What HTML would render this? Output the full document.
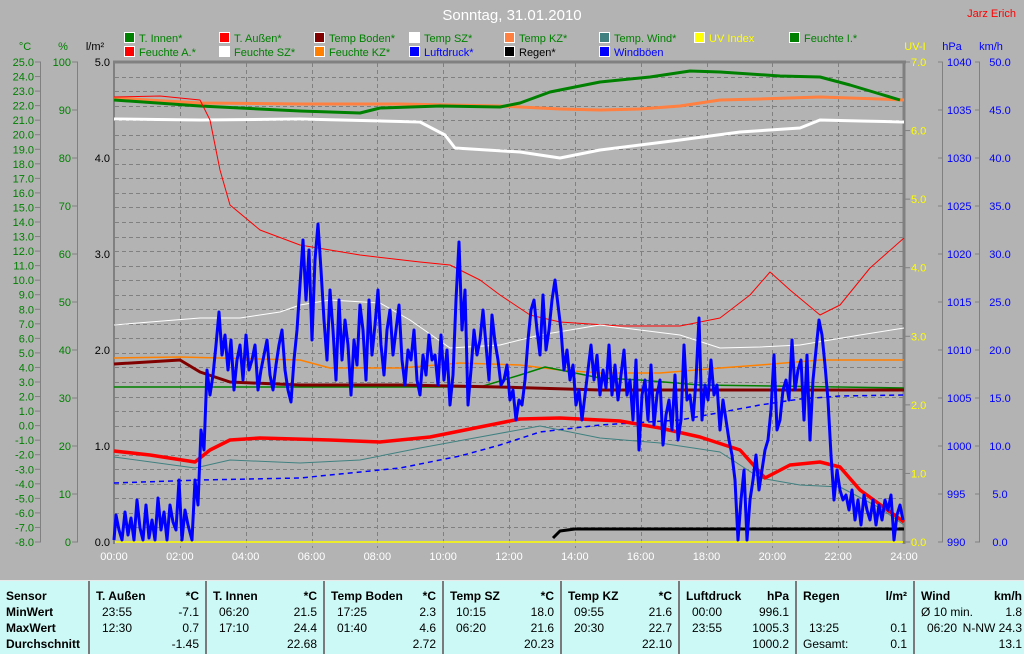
<!DOCTYPE html>
<html><head><meta charset="utf-8"><style>
html,body{margin:0;padding:0;background:#b3b3b3;}
body{width:1024px;height:653px;overflow:hidden;position:relative;font-family:"Liberation Sans",sans-serif;}
svg{position:absolute;left:0;top:0}
text{font-family:"Liberation Sans",sans-serif;font-size:11px}
.t{position:absolute;left:0;top:580px;width:1024px;height:73px;background:#ccf9f5;border-top:1px solid #e8e8e8}
.c{position:absolute;top:0;height:73px;border-left:2px solid #7a7a7a;box-sizing:border-box;font-size:12px;color:#000}
.r{position:absolute;left:0;right:0;height:16px;line-height:16px}
.r b{font-weight:bold}
.l{position:absolute;left:6px}
.tm{position:absolute;left:12px}
.v{position:absolute;right:6px}
</style></head><body>
<svg width="1024" height="653" viewBox="0 0 1024 653">
<text x="512" y="20" fill="#fff" text-anchor="middle" style="font-size:15px">Sonntag, 31.01.2010</text>
<text x="1016" y="17" fill="#f00" text-anchor="end" style="font-size:11px">Jarz Erich</text>
<g stroke="#fff" stroke-width="1">
<rect x="124.5" y="32.5" width="10" height="10" fill="#008000"/><rect x="124.5" y="46.5" width="10" height="10" fill="#f00"/>
<rect x="219.5" y="32.5" width="10" height="10" fill="#f00"/><rect x="219.5" y="46.5" width="10" height="10" fill="#fff"/>
<rect x="314.5" y="32.5" width="10" height="10" fill="#800000"/><rect x="314.5" y="46.5" width="10" height="10" fill="#ff8000"/>
<rect x="409.5" y="32.5" width="10" height="10" fill="#fff"/><rect x="409.5" y="46.5" width="10" height="10" fill="#0000ff"/>
<rect x="504.5" y="32.5" width="10" height="10" fill="#ff8040"/><rect x="504.5" y="46.5" width="10" height="10" fill="#000"/>
<rect x="599.5" y="32.5" width="10" height="10" fill="#408080"/><rect x="599.5" y="46.5" width="10" height="10" fill="#0000ff"/>
<rect x="694.5" y="32.5" width="10" height="10" fill="#ffff00"/>
<rect x="789.5" y="32.5" width="10" height="10" fill="#008000"/>
</g>
<g fill="#008000">
<text x="139" y="42">T. Innen*</text><text x="139" y="56">Feuchte A.*</text>
<text x="234" y="42">T. Außen*</text><text x="234" y="56">Feuchte SZ*</text>
<text x="329" y="42">Temp Boden*</text><text x="329" y="56">Feuchte KZ*</text>
<text x="424" y="42">Temp SZ*</text><text x="424" y="56" fill="#0000ff">Luftdruck*</text>
<text x="519" y="42">Temp KZ*</text><text x="519" y="56" fill="#000">Regen*</text>
<text x="614" y="42">Temp. Wind*</text><text x="614" y="56" fill="#0000ff">Windböen</text>
<text x="709" y="42" fill="#ffff00">UV Index</text>
<text x="804" y="42">Feuchte I.*</text>
</g>
<text x="25" y="50" fill="#008000" text-anchor="middle">°C</text>
<text x="63" y="50" fill="#008000" text-anchor="middle">%</text>
<text x="95" y="50" fill="#000" text-anchor="middle">l/m²</text>
<text x="915" y="50" fill="#ffff00" text-anchor="middle">UV-I</text>
<text x="952" y="50" fill="#0000ff" text-anchor="middle">hPa</text>
<text x="991" y="50" fill="#0000ff" text-anchor="middle">km/h</text>
<g stroke="#808080" stroke-width="1">
<line x1="40.5" y1="62" x2="40.5" y2="542"/><line x1="77.5" y1="62" x2="77.5" y2="542"/>
<line x1="942.5" y1="62" x2="942.5" y2="542"/><line x1="979.5" y1="62" x2="979.5" y2="542"/>
</g>
<g id="ct" stroke="#808080"></g>
<g id="labels"></g>
<g id="grid" stroke="#808080" stroke-dasharray="4,3" stroke-width="1"></g>
<line x1="113" y1="62" x2="906" y2="62" stroke="#808080" stroke-width="3"/>
<line x1="114" y1="61" x2="114" y2="544" stroke="#808080" stroke-width="2"/>
<line x1="904" y1="61" x2="904" y2="544" stroke="#808080" stroke-width="3"/>
<line x1="115" y1="542" x2="903" y2="542" stroke="#ffff00" stroke-width="1.5"/>
<g fill="none" stroke-linejoin="round">
<polyline stroke="#ff8040" stroke-width="3" points="114,98 200,103 300,104 400,104 500,106 560,109 600,110 640,109 680,106 720,100 760,99 820,97 880,99 904,100"/>
<polyline stroke="#008000" stroke-width="3" points="114,100 200,106 300,111 360,113 380,108 440,106 500,107 520,103 550,92 600,82 650,77 690,71 720,72 780,76 820,77 850,85 880,94 900,100"/>
<polyline stroke="#fff" stroke-width="3" points="114,119 200,120 300,119 420,122 445,135 455,148 520,152 560,158 600,150 680,140 740,132 800,128 820,120 860,121 904,122"/>
<polyline stroke="#f00" stroke-width="1" points="114,97 160,96 200,100 210,120 220,170 230,205 260,230 300,245 360,255 420,262 450,265 480,280 500,295 530,315 560,322 620,326 680,326 720,318 750,295 770,272 790,290 820,315 840,305 870,268 904,238"/>
<polyline stroke="#fff" stroke-width="1" points="114,325 150,322 200,318 240,318 280,312 300,305 330,300 380,303 410,320 450,348 500,345 540,335 600,325 640,330 680,335 720,348 760,347 800,345 860,335 904,328"/>
<polyline stroke="#ff8000" stroke-width="1.5" points="114,358 180,357 300,360 330,368 400,368 460,363 520,365 560,370 600,373 660,373 720,368 760,365 820,360 904,360"/>
<polyline stroke="#008000" stroke-width="1.5" points="114,387 480,387 520,375 545,367 570,372 600,378 640,380 700,385 904,388"/>
<polyline stroke="#800000" stroke-width="3" points="114,364 180,360 200,372 230,382 300,385 400,385 500,387 600,390 700,390 800,390 904,390"/>
<polyline stroke="#0000ff" stroke-width="1.5" stroke-dasharray="5,4" points="114,483 200,480 300,478 400,468 460,456 500,445 540,432 600,425 680,420 760,405 800,399 840,396 904,395"/>
<polyline stroke="#408080" stroke-width="1" points="114,457 195,468 230,460 300,463 360,460 420,448 480,437 540,426 600,438 660,443 720,452 760,478 800,485 840,487 880,508 904,525"/>
<polyline stroke="#f00" stroke-width="3.5" points="114,451 150,455 195,462 210,450 230,440 260,438 330,440 380,442 430,437 480,427 520,419 560,418 620,421 660,428 700,437 740,450 765,478 790,465 820,462 840,467 860,490 904,522"/>
<polyline stroke="#000" stroke-width="3" points="553,538 560,531 575,529 904,529"/>
<polyline stroke="#0000ff" stroke-width="3" points="114,540 116,515 119,530 122,540 125,512 128,535 131,518 134,540 137,500 140,528 143,540 146,505 149,538 152,520 155,540 158,498 161,530 164,512 167,540 170,505 173,522 176,530 179,480 182,540 185,510 188,525 192,540 195,480 198,505 201,430 204,450 207,370 210,395 213,375 216,345 219,312 222,355 225,335 228,370 231,340 234,390 237,360 240,345 243,380 246,335 249,370 252,360 255,345 258,390 261,370 264,355 267,340 270,375 273,390 276,365 279,345 282,330 285,370 288,390 291,402 294,360 297,330 300,285 303,240 306,300 309,250 312,340 315,260 318,224 321,270 324,320 327,360 330,290 333,330 336,380 339,300 342,360 345,320 348,345 351,395 354,340 357,365 360,305 363,330 366,380 369,300 372,355 375,325 378,290 381,345 384,375 387,330 390,310 393,355 396,330 399,305 402,360 405,385 408,350 411,360 414,330 417,380 420,395 423,355 426,375 429,335 432,360 435,355 438,385 441,335 444,380 447,350 450,405 453,375 456,300 459,242 462,330 465,290 468,405 471,370 474,330 477,355 480,340 483,310 486,345 489,380 492,315 495,342 498,360 501,385 504,380 507,365 510,400 513,390 516,420 519,400 522,405 525,380 528,340 531,310 534,300 537,330 540,355 543,295 546,350 549,330 552,300 555,280 558,305 561,330 564,370 567,350 570,380 573,365 576,405 579,390 582,420 585,395 588,370 591,345 594,380 597,355 600,395 603,370 606,388 609,345 612,395 615,365 618,400 621,375 624,350 627,395 630,380 633,420 636,360 639,450 642,395 645,380 648,420 651,365 654,425 657,395 660,380 663,445 666,415 669,400 672,430 675,375 678,440 681,420 684,345 687,400 690,395 693,420 696,380 699,318 702,420 705,385 708,400 711,360 714,395 717,385 720,430 723,400 726,420 729,440 732,455 735,480 738,540 741,500 744,470 747,540 750,500 753,480 756,455 759,490 762,470 765,450 768,440 771,410 774,355 777,430 780,420 783,390 786,380 789,400 792,340 795,390 798,370 801,360 804,420 807,355 810,440 813,380 816,350 819,320 822,335 825,365 828,400 831,455 834,500 837,470 840,490 843,500 846,495 849,510 852,490 855,520 858,500 861,525 864,495 867,510 870,520 873,500 876,525 879,505 882,520 885,500 888,510 891,495 894,540 897,515 900,505 903,520"/>
</g>
<g id="xl" fill="#fff"></g>
</svg>
<div class="t">
 <div class="c" style="left:0;width:88px;border-left:none"><div class="r" style="top:7px"><b class="l">Sensor</b></div><div class="r" style="top:23px"><b class="l">MinWert</b></div><div class="r" style="top:39px"><b class="l">MaxWert</b></div><div class="r" style="top:55px"><b class="l">Durchschnitt</b></div></div>
 <div class="c" style="left:88px;width:117px"><div class="r" style="top:7px"><b class="l">T. Außen</b><b class="v">*C</b></div><div class="r" style="top:23px"><span class="tm">23:55</span><span class="v">-7.1</span></div><div class="r" style="top:39px"><span class="tm">12:30</span><span class="v">0.7</span></div><div class="r" style="top:55px"><span class="v">-1.45</span></div></div>
 <div class="c" style="left:205px;width:118px"><div class="r" style="top:7px"><b class="l">T. Innen</b><b class="v">*C</b></div><div class="r" style="top:23px"><span class="tm">06:20</span><span class="v">21.5</span></div><div class="r" style="top:39px"><span class="tm">17:10</span><span class="v">24.4</span></div><div class="r" style="top:55px"><span class="v">22.68</span></div></div>
 <div class="c" style="left:323px;width:119px"><div class="r" style="top:7px"><b class="l">Temp Boden</b><b class="v">*C</b></div><div class="r" style="top:23px"><span class="tm">17:25</span><span class="v">2.3</span></div><div class="r" style="top:39px"><span class="tm">01:40</span><span class="v">4.6</span></div><div class="r" style="top:55px"><span class="v">2.72</span></div></div>
 <div class="c" style="left:442px;width:118px"><div class="r" style="top:7px"><b class="l">Temp SZ</b><b class="v">*C</b></div><div class="r" style="top:23px"><span class="tm">10:15</span><span class="v">18.0</span></div><div class="r" style="top:39px"><span class="tm">06:20</span><span class="v">21.6</span></div><div class="r" style="top:55px"><span class="v">20.23</span></div></div>
 <div class="c" style="left:560px;width:118px"><div class="r" style="top:7px"><b class="l">Temp KZ</b><b class="v">*C</b></div><div class="r" style="top:23px"><span class="tm">09:55</span><span class="v">21.6</span></div><div class="r" style="top:39px"><span class="tm">20:30</span><span class="v">22.7</span></div><div class="r" style="top:55px"><span class="v">22.10</span></div></div>
 <div class="c" style="left:678px;width:117px"><div class="r" style="top:7px"><b class="l">Luftdruck</b><b class="v">hPa</b></div><div class="r" style="top:23px"><span class="tm">00:00</span><span class="v">996.1</span></div><div class="r" style="top:39px"><span class="tm">23:55</span><span class="v">1005.3</span></div><div class="r" style="top:55px"><span class="v">1000.2</span></div></div>
 <div class="c" style="left:795px;width:118px"><div class="r" style="top:7px"><b class="l">Regen</b><b class="v">l/m²</b></div><div class="r" style="top:39px"><span class="tm">13:25</span><span class="v">0.1</span></div><div class="r" style="top:55px"><span class="l">Gesamt:</span><span class="v">0.1</span></div></div>
 <div class="c" style="left:913px;width:111px"><div class="r" style="top:7px"><b class="l">Wind</b><b class="v" style="right:2px">km/h</b></div><div class="r" style="top:23px"><span class="l">Ø 10 min.</span><span class="v" style="right:2px">1.8</span></div><div class="r" style="top:39px"><span class="tm">06:20</span><span class="v" style="right:2px">N-NW 24.3</span></div><div class="r" style="top:55px"><span class="v" style="right:2px">13.1</span></div></div>
</div>
<script>
var NS="http://www.w3.org/2000/svg";
function el(p,n,a,t){var e=document.createElementNS(NS,n);for(var k in a)e.setAttribute(k,a[k]);if(t!=null)e.textContent=t;document.getElementById(p).appendChild(e);}
for(var i=0;i<=33;i++){var y=62+i*480/33;var v=(25-i).toFixed(1);
 el("labels","text",{x:34,y:y+4,fill:"#008000","text-anchor":"end"},v);
 el("ct","line",{x1:35,y1:y,x2:41,y2:y});
 if(i>0&&i<33) el("grid","line",{x1:115,y1:Math.round(y)+.5,x2:903,y2:Math.round(y)+.5});}
for(var i=0;i<=10;i++){var y=62+i*48;el("labels","text",{x:71,y:y+4,fill:"#008000","text-anchor":"end"},100-i*10);el("ct","line",{x1:72,y1:y,x2:78,y2:y});
 el("labels","text",{x:1000,y:y+4,fill:"#0000ff","text-anchor":"middle"},(50-i*5).toFixed(1));el("ct","line",{x1:975,y1:y,x2:980,y2:y});
 el("labels","text",{x:947,y:y+4,fill:"#0000ff"},1040-i*5);el("ct","line",{x1:938,y1:y,x2:943,y2:y});}
for(var i=0;i<=5;i++){var y=62+i*96;el("labels","text",{x:110,y:y+4,fill:"#000","text-anchor":"end"},(5-i).toFixed(1));}
for(var i=0;i<=7;i++){var y=62+i*480/7;el("labels","text",{x:911,y:y+4,fill:"#ffff00"},(7-i).toFixed(1));el("ct","line",{x1:905,y1:y,x2:910,y2:y});}
for(var i=0;i<=12;i++){var x=114+i*790/12;var h=(i*2<10?"0":"")+(i*2)+":00";
 el("xl","text",{x:x,y:560,"text-anchor":"middle"},h);
 if(i>0&&i<12) el("grid","line",{x1:Math.round(x)+.5,y1:63,x2:Math.round(x)+.5,y2:548});}
</script>
</body></html>
